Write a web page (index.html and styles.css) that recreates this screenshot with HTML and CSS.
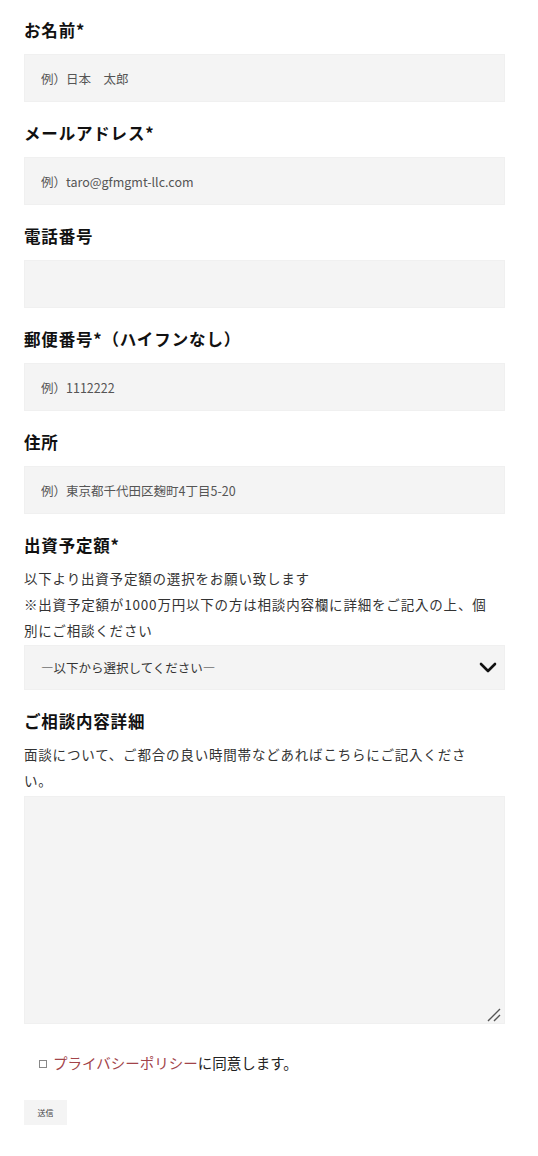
FILE: index.html
```html
<!DOCTYPE html>
<html lang="ja">
<head>
<meta charset="utf-8">
<link rel="stylesheet" href="styles.css">
</head>
<body>
<form class="form">
  <div class="field">
    <label class="label">お名前*</label>
    <input class="input" type="text" placeholder="例）日本　太郎">
  </div>
  <div class="field">
    <label class="label">メールアドレス*</label>
    <input class="input" type="text" placeholder="例）taro@gfmgmt-llc.com">
  </div>
  <div class="field">
    <label class="label">電話番号</label>
    <input class="input" type="text">
  </div>
  <div class="field">
    <label class="label">郵便番号*（ハイフンなし）</label>
    <input class="input" type="text" placeholder="例）1112222">
  </div>
  <div class="field">
    <label class="label">住所</label>
    <input class="input" type="text" placeholder="例）東京都千代田区麹町4丁目5-20">
  </div>
  <div class="field">
    <label class="label">出資予定額*</label>
    <p class="desc">以下より出資予定額の選択をお願い致します<br>※出資予定額が1000万円以下の方は相談内容欄に詳細をご記入の上、個別にご相談ください</p>
    <div class="select-wrap">
      <select class="select">
        <option>―以下から選択してください―</option>
      </select>
      <svg class="chev" width="18" height="12" viewBox="0 0 18 12"><path d="M2 2 L9 9 L16 2" fill="none" stroke="#111" stroke-width="2.6" stroke-linecap="round" stroke-linejoin="round"/></svg>
    </div>
  </div>
  <div class="field">
    <label class="label">ご相談内容詳細</label>
    <p class="desc desc-narrow">面談について、ご都合の良い時間帯などあればこちらにご記入ください。</p>
    <div class="ta-wrap">
      <textarea class="textarea"></textarea>
      <svg class="grip" width="14" height="14" viewBox="0 0 14 14"><path d="M1 13 L13 1 M7 13 L13 7" fill="none" stroke="#555" stroke-width="1.4"/></svg>
    </div>
  </div>
  <div class="agree">
    <span class="box"></span>
    <span><a class="link" href="#">プライバシーポリシー</a>に同意します。</span>
  </div>
  <button class="submit" type="button">送信</button>
</form>
</body>
</html>
```
FILE: styles.css
```css
* { box-sizing: border-box; }
html, body { margin: 0; background: #fff; }
body {
  font-family: "Noto Sans CJK JP", "Noto Sans", sans-serif;
  color: #222;
}
.form {
  padding: 18px 33px 30px 24px;
  display: flex;
  flex-direction: column;
}
.field {
  display: flex;
  flex-direction: column;
  margin-bottom: 19px;
}
.label {
  font-size: 16.5px;
  font-weight: 700;
  line-height: 24px;
  letter-spacing: 0.05em;
  color: #111;
  margin-bottom: 12px;
}
.input {
  height: 48px;
  border: 1px solid #f0f0f0;
  background: #f4f4f4;
  padding: 0 16px;
  font-family: inherit;
  font-size: 12.5px;
  color: #333;
  outline: none;
}
.input::placeholder { color: #555; }
.desc {
  margin: -4px 0 2px;
  font-size: 13.5px;
  line-height: 26px;
  letter-spacing: 0.06em;
  color: #333;
  padding-right: 8px;
}
.desc-narrow { padding-right: 30px; margin-bottom: 3px; }
.select-wrap {
  position: relative;
  height: 45px;
}
.select {
  width: 100%;
  height: 45px;
  appearance: none;
  -webkit-appearance: none;
  border: 1px solid #f0f0f0;
  background: #f4f4f4;
  padding: 0 16px;
  font-family: inherit;
  font-size: 12.5px;
  color: #333;
  outline: none;
  border-radius: 0;
}
.chev {
  position: absolute;
  right: 8px;
  top: 17px;
  pointer-events: none;
}
.ta-wrap {
  position: relative;
  height: 228px;
}
.textarea {
  width: 100%;
  height: 228px;
  border: 1px solid #f0f0f0;
  background: #f4f4f4;
  resize: none;
  font-family: inherit;
  margin: 0;
  display: block;
}
.grip {
  position: absolute;
  right: 4px;
  bottom: 2px;
  pointer-events: none;
}
.agree {
  display: flex;
  align-items: center;
  gap: 6px;
  padding-left: 15px;
  margin-top: 8px;
  font-size: 14.5px;
  line-height: 24px;
  color: #222;
}
.box {
  width: 8px;
  height: 8px;
  border: 1px solid #888;
  display: inline-block;
  margin-top: 2px;
}
.link { color: #a2444a; text-decoration: none; }
.submit {
  align-self: flex-start;
  margin-top: 25px;
  width: 43px;
  height: 25px;
  border: none;
  background: #f4f4f4;
  font-family: inherit;
  font-size: 8px;
  color: #444;
  padding: 0;
}
```
